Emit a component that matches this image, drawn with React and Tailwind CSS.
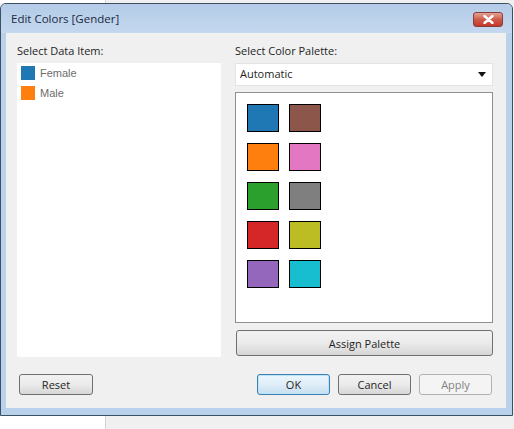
import React from "react";

const palette = [
  ["#1f77b4", "#8c564b"],
  ["#ff7f0e", "#e377c2"],
  ["#2ca02c", "#7f7f7f"],
  ["#d62728", "#bcbd22"],
  ["#9467bd", "#17becf"],
];

const items = [
  { name: "Female", color: "#1f77b4" },
  { name: "Male", color: "#ff7f0e" },
];

const ui = { fontFamily: '"Open Sans", "Noto Sans", sans-serif' };
const arial = { fontFamily: '"Liberation Sans", Arial, sans-serif' };

const Button = ({ children, className = "", variant = "normal" }) => {
  const styles = {
    normal:
      "border-[#707070] bg-gradient-to-b from-[#f2f2f2] via-[#ebebeb] to-[#d6d6d6] text-[#1e1e1e]",
    focus:
      "border-[#3c7fb1] bg-gradient-to-b from-[#eaf6fd] via-[#e0eef8] to-[#c6dff0] text-[#1e1e1e] shadow-[inset_0_0_0_1px_#bde4f9]",
    disabled: "border-[#adb2b5] bg-[#f4f4f4] text-[#838383]",
  };
  return (
    <button
      className={`flex items-center justify-center rounded-[3px] border text-[11px] leading-none ${styles[variant]} ${className}`}
      style={ui}
    >
      {children}
    </button>
  );
};

export default function App() {
  return (
    <div className="relative h-[429px] w-[514px] overflow-hidden bg-[#f0f0f0]">
      {/* strip behind the dialog */}
      <div className="flex h-[3px]">
        <div className="w-[105px] bg-white" />
        <div className="w-px bg-[#d4d4d4]" />
        <div className="flex-1 bg-[#f0f0f0]" />
      </div>

      {/* dialog window */}
      <div className="h-[413px] w-[513px] rounded-t-[6px] border border-[#3d4f63] bg-[#b9d1ea]">
        <div className="flex h-[29px] items-center justify-between rounded-t-[5px] bg-gradient-to-b from-[#b4cce8] to-[#c4d8ef] pl-[10px] pr-[9px]">
          <span className="text-[11.5px] text-[#1c2a3e]" style={ui}>
            Edit Colors [Gender]
          </span>
          <div className="mt-[1px] flex h-[15px] w-[30px] items-center justify-center rounded-[3px] border border-[#8a3c3c] bg-gradient-to-b from-[#e2a394] via-[#cf5a4a] to-[#c1382a]">
            <svg width="11" height="9" viewBox="0 0 11 9">
              <path
                d="M1.5 1 L9.5 8 M9.5 1 L1.5 8"
                stroke="#fff"
                strokeWidth="2.4"
                strokeLinecap="round"
              />
            </svg>
          </div>
        </div>

        {/* client area */}
        <div className="mx-[5px] h-[375px] w-[500px] bg-[#f0f0f0] pl-[11px] pt-[9px]">
          <div className="flex gap-[14px]">
            {/* left column */}
            <div className="flex w-[204px] flex-col">
              <div className="h-[17px] text-[11px] leading-[17px] text-[#1e1e1e]" style={ui}>
                Select Data Item:
              </div>
              <div className="mt-[4px] h-[294px] bg-white pl-[4px] pt-[3px]">
                {items.map((it) => (
                  <div key={it.name} className="mb-[6px] flex h-[14px] items-center gap-[5px]">
                    <div className="h-[14px] w-[14px]" style={{ backgroundColor: it.color }} />
                    <span className="text-[11px] text-[#6d6d6d]" style={arial}>
                      {it.name}
                    </span>
                  </div>
                ))}
              </div>
            </div>

            {/* right column */}
            <div className="flex w-[258px] flex-col">
              <div className="h-[17px] text-[11px] leading-[17px] text-[#1e1e1e]" style={ui}>
                Select Color Palette:
              </div>
              <div className="mt-[4px] flex h-[23px] items-center justify-between border border-[#e3e3e3] bg-white pl-[4px] pr-[6px]">
                <span className="text-[11px] text-[#1e1e1e]" style={ui}>
                  Automatic
                </span>
                <svg width="8" height="5" viewBox="0 0 8 5">
                  <path d="M0 0 H8 L4 5 Z" fill="#111" />
                </svg>
              </div>
              <div className="mt-[6px] h-[231px] border border-[#8e8f8f] bg-white pl-[11px] pt-[11px]">
                <div className="grid grid-cols-[32px_32px] gap-x-[10px] gap-y-[11px]">
                  {palette.flat().map((c) => (
                    <div
                      key={c}
                      className="h-[28px] w-[32px] border border-black"
                      style={{ backgroundColor: c }}
                    />
                  ))}
                </div>
              </div>
              <Button className="ml-[1px] mt-[7px] h-[26px] w-[257px]">Assign Palette</Button>
            </div>
          </div>

          {/* bottom buttons */}
          <div className="mt-[17px] flex h-[21px] items-center">
            <Button className="ml-[2px] h-[21px] w-[74px]">Reset</Button>
            <div className="ml-[164px] flex gap-[8px]">
              <Button variant="focus" className="h-[21px] w-[73px]">
                OK
              </Button>
              <Button className="h-[21px] w-[73px]">Cancel</Button>
              <Button variant="disabled" className="h-[21px] w-[73px]">
                Apply
              </Button>
            </div>
          </div>
        </div>
      </div>

      {/* strip below the dialog */}
      <div className="flex h-[13px]">
        <div className="w-[105px] bg-white" />
        <div className="w-px bg-[#d4d4d4]" />
        <div className="flex-1 bg-[#f0f0f0]" />
      </div>
    </div>
  );
}
